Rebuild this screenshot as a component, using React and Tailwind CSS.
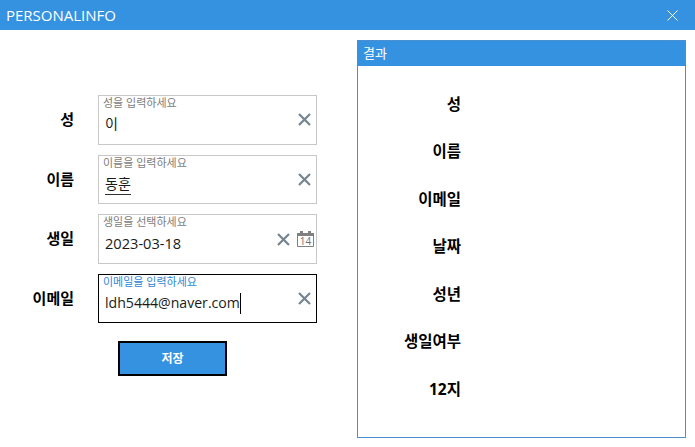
const FONT = "font-['Open_Sans','Noto_Sans_CJK_KR',sans-serif]";

const RESULT_ROWS = ['성', '이름', '이메일', '날짜', '성년', '생일여부', '12지'];

function ClearIcon() {
  return (
    <svg width="13" height="13" viewBox="0 0 13 13" className="shrink-0">
      <path d="M1 1 L12 12 M12 1 L1 12" stroke="#748491" strokeWidth="2.2" fill="none" />
    </svg>
  );
}

function CalendarIcon() {
  return (
    <svg width="17" height="16" viewBox="0 0 17 16" className="shrink-0">
      <path d="M0.5 2.5 H16.5 V15.5 H0.5 Z" stroke="#808080" strokeWidth="1" fill="none" />
      <rect x="0" y="2" width="17" height="3" fill="#808080" />
      <rect x="3" y="0" width="3" height="4" fill="#808080" />
      <rect x="11" y="0" width="3" height="4" fill="#808080" />
      <text x="8.5" y="13.7" textAnchor="middle" fontSize="10" fill="#707070" fontFamily="Open Sans">14</text>
    </svg>
  );
}

function Field({ label, hint, value, focused, underline, caret, calendar, height }) {
  return (
    <div className="flex items-start">
      <div className="w-[74px] pt-[12px] text-right text-[15px] leading-[24px] font-bold text-black">{label}</div>
      <div
        className={`ml-[24px] flex w-[219px] border ${height} ${focused ? 'border-black' : 'border-[#c8c8c8]'}`}
      >
        <div className="min-w-0 flex-1 pl-[4px]">
          <div className={`text-[11px] leading-[13px] ${focused ? 'text-[#2f86d6]' : 'text-[#7c7c7c]'}`}>{hint}</div>
          <div className={`mt-[2px] flex pl-[2px] leading-[26px] text-[#1a1a1a] ${calendar ? 'text-[14.6px]' : 'text-[14.1px]'}`}>
            <span className={underline ? 'h-[24px] border-b border-[#333333]' : ''}>{value}</span>
            {caret ? <span className="mt-[3px] h-[21px] w-px bg-black" /> : null}
          </div>
        </div>
        {calendar ? (
          <div className="flex items-center gap-[7px] self-start pt-[16px] pr-[2px]">
            <ClearIcon />
            <CalendarIcon />
          </div>
        ) : (
          <div className="self-start pt-[17px] pr-[5px]">
            <ClearIcon />
          </div>
        )}
      </div>
    </div>
  );
}

export default function App() {
  return (
    <div className={`h-[447px] w-[695px] overflow-hidden bg-white ${FONT}`}>
      <header className="flex h-[30px] items-center justify-between bg-[#3492e0] pr-[17px] pl-[6px] text-white">
        <span className="text-[15px]">PERSONALINFO</span>
        <svg width="11" height="11" viewBox="0 0 11 11">
          <path d="M0.5 0.5 L10.5 10.5 M10.5 0.5 L0.5 10.5" stroke="white" strokeWidth="1" fill="none" />
        </svg>
      </header>

      <div className="flex">
        <div className="w-[357px] pt-[65px]">
          <div className="flex flex-col gap-[10px]">
            <Field label="성" hint="성을 입력하세요" value="이" height="h-[50px]" />
            <Field label="이름" hint="이름을 입력하세요" value="동훈" underline height="h-[49px]" />
            <Field label="생일" hint="생일을 선택하세요" value="2023-03-18" calendar height="h-[50px]" />
            <Field label="이메일" hint="이메일을 입력하세요" value="ldh5444@naver.com" focused caret height="h-[49px]" />
          </div>
          <button className="mt-[18px] ml-[118px] flex h-[35px] w-[109px] items-center justify-center border-2 border-black bg-[#3492e0] text-[12px] font-bold text-white">
            저장
          </button>
        </div>

        <section className="mt-[10px] flex h-[398px] w-[329px] flex-col border border-[#4a90d0]">
          <div className="flex h-[25px] items-center bg-[#3492e0] pl-[5px] text-[13px] text-white">결과</div>
          <div className="flex flex-col gap-[23.5px] pt-[25.5px]">
            {RESULT_ROWS.map((row) => (
              <div key={row} className="w-[103px] text-right text-[15.5px] leading-[24px] font-bold text-black">
                {row}
              </div>
            ))}
          </div>
        </section>
      </div>
    </div>
  );
}
